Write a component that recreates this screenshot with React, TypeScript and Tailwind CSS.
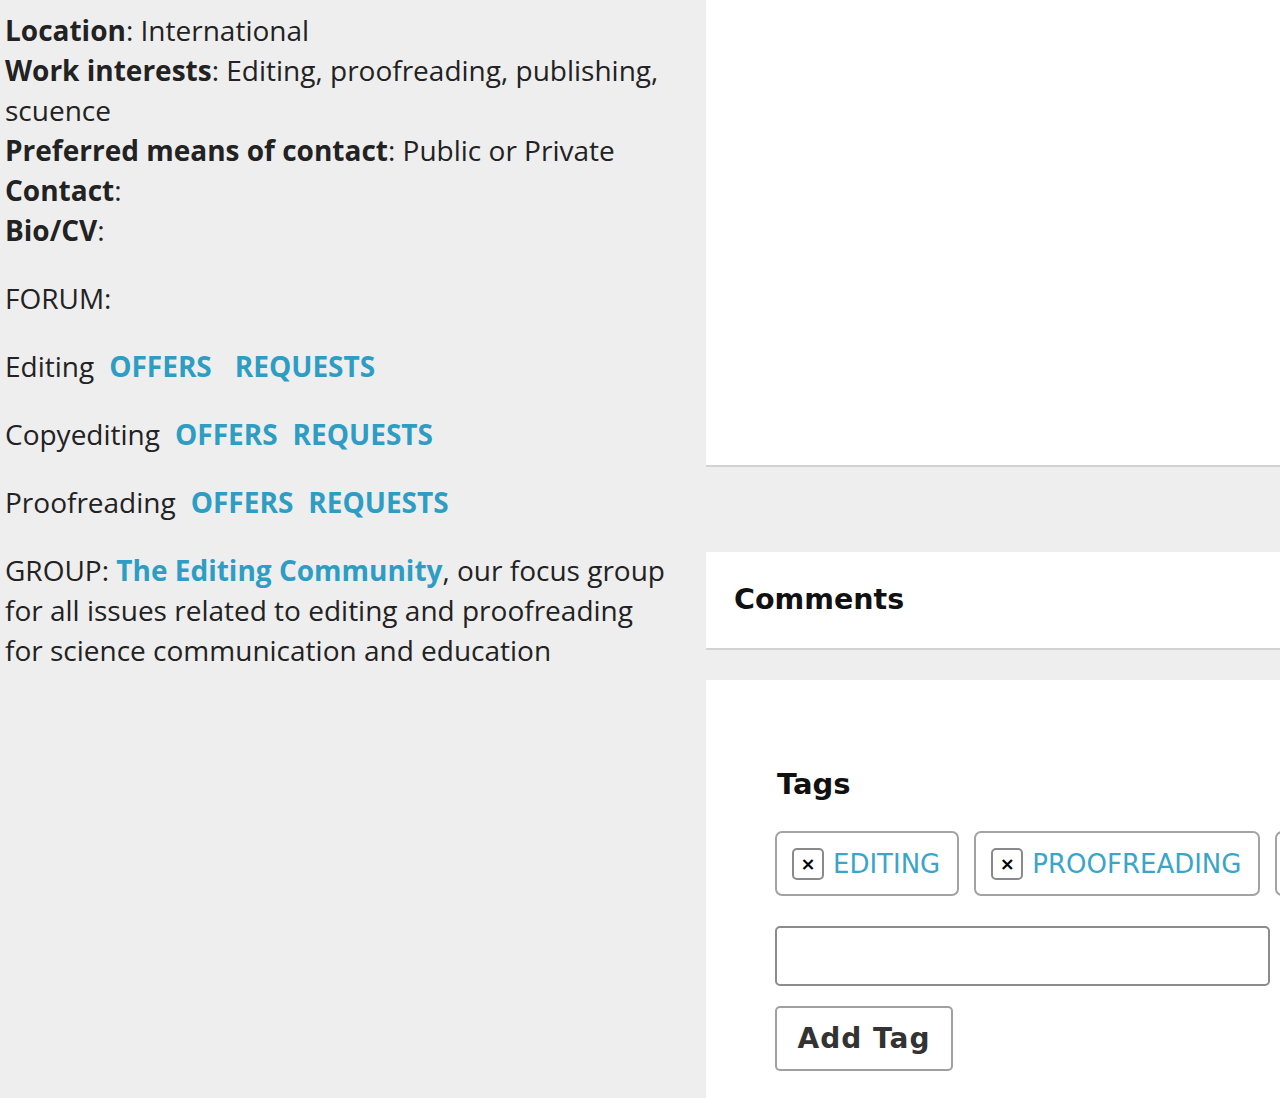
import { ReactNode } from "react";

const link = "font-bold text-[#2e9dc4]";

const Field = ({ label, children }: { label: string; children?: ReactNode }) => (
	<div>
		<span className="font-bold">{label}</span>:{children ? " " : ""}
		{children}
	</div>
);

const ForumRow = ({ name, wide }: { name: string; wide?: boolean }) => (
	<p className="flex items-baseline">
		<span>{name}</span>
		<span className={`${link} ml-[15px]`}>OFFERS</span>
		<span className={`${link} ${wide ? "ml-[23px]" : "ml-[15px]"}`}>REQUESTS</span>
	</p>
);

const Chip = ({ label }: { label: string }) => (
	<div className="flex h-[65px] shrink-0 items-center gap-[9px] rounded-[7px] border-2 border-[#a3a3a3] bg-white pl-[15px] pr-[17px]">
		<span className="flex h-[32px] w-[32px] items-center justify-center rounded-[5px] border-2 border-[#8a8a8a] text-[18px] font-bold leading-none text-black">
			×
		</span>
		<span className="text-[26px] leading-none text-[#3aa5c8]">{label}</span>
	</div>
);

export default function App() {
	return (
		<div className="flex h-[1098px] w-[1280px] overflow-hidden bg-[#eeeeee]">
			<div className="w-[706px] shrink-0 px-[5px] pt-[10px] font-['Open_Sans',sans-serif] text-[28px] leading-[40px] text-[#222]">
				<div className="flex flex-col gap-[28px]">
					<div>
						<Field label="Location">International</Field>
						<Field label="Work interests">
							Editing, proofreading, publishing,
							<br />
							scuence
						</Field>
						<Field label="Preferred means of contact">Public or Private</Field>
						<Field label="Contact" />
						<Field label="Bio/CV" />
					</div>
					<p>FORUM:</p>
					<ForumRow name="Editing" wide />
					<ForumRow name="Copyediting" />
					<ForumRow name="Proofreading" />
					<p className="whitespace-nowrap">
						GROUP: <span className={link}>The Editing Community</span>, our focus group
						<br />
						for all issues related to editing and proofreading
						<br />
						for science communication and education
					</p>
				</div>
			</div>

			<div className="flex min-w-0 flex-1 flex-col font-['DejaVu_Sans',sans-serif]">
				<div className="h-[467px] shrink-0 border-b-2 border-[#d2d2d2] bg-white" />
				<div className="mt-[85px] flex h-[98px] shrink-0 items-center border-b-2 border-[#d2d2d2] bg-white pl-[28px]">
					<h2 className="text-[28.5px] font-bold text-[#111]">Comments</h2>
				</div>
				<div className="mt-[30px] flex-1 bg-white pl-[69px] pt-[86px]">
					<h3 className="ml-[2px] text-[29px] font-bold leading-[36px] text-[#111]">Tags</h3>
					<div className="mt-[29px] flex gap-[15px]">
						<Chip label="EDITING" />
						<Chip label="PROOFREADING" />
						<Chip label="SCIENCE" />
					</div>
					<input
						type="text"
						className="mt-[30px] block h-[60px] w-[495px] rounded-[5px] border-2 border-[#8c8c8c] bg-white"
					/>
					<button
						type="button"
						className="mt-[20px] h-[65px] w-[178px] rounded-[5px] border-2 border-[#a0a0a0] bg-white text-[28px] font-bold tracking-[1px] text-[#333]"
					>
						Add Tag
					</button>
				</div>
			</div>
		</div>
	);
}
